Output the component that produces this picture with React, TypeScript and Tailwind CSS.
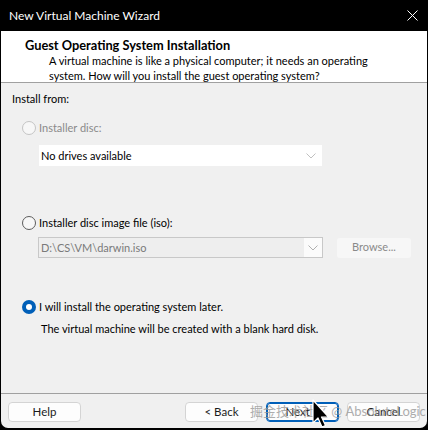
import React from 'react';

const font = { fontFamily: 'Lato, "Noto Sans CJK SC", sans-serif' };

const Radio = ({ checked = false, disabled = false }: { checked?: boolean; disabled?: boolean }) => {
  if (checked) {
    return (
      <span className="flex h-[14px] w-[14px] items-center justify-center rounded-full bg-[#005fb8]">
        <span className="h-[6px] w-[6px] rounded-full bg-white" />
      </span>
    );
  }
  return (
    <span
      className={`h-[14px] w-[14px] rounded-full border bg-[#f7f7f7] ${
        disabled ? 'border-[#c4c4c4]' : 'border-[#5c5c5c]'
      }`}
    />
  );
};

const Chevron = ({ color = '#9a9a9a' }: { color?: string }) => (
  <svg width="10" height="6" viewBox="0 0 10 6" fill="none">
    <path d="M0.5 0.5 L5 5 L9.5 0.5" stroke={color} strokeWidth="1" />
  </svg>
);

const Button = ({ label, focused = false }: { label: string; focused?: boolean }) => (
  <div
    className={`flex h-[20px] w-[73px] items-center justify-center rounded-[4px] border bg-[#fdfdfd] text-[11.5px] text-[#1b1b1b] ${
      focused ? 'border-[#005fb8] shadow-[inset_0_0_0_1px_#005fb8]' : 'border-[#d4d4d4]'
    }`}
  >
    {label}
  </div>
);

export default function App() {
  return (
    <div className="relative h-[430px] w-[428px] overflow-hidden bg-black" style={font}>
      {/* Title bar */}
      <div className="flex h-[31px] items-center justify-between pl-[9px] pr-[10px] text-[12px] text-white">
        <span>New Virtual Machine Wizard</span>
        <svg width="11" height="11" viewBox="0 0 11 11">
          <path d="M0.5 0.5 L10.5 10.5 M10.5 0.5 L0.5 10.5" stroke="#ffffff" strokeWidth="1" />
        </svg>
      </div>

      <div className="mx-[1px] flex h-[397px] flex-col overflow-hidden rounded-b-[7px] bg-[#f0f0f0]">
        {/* Header */}
        <div className="h-[52px] border-b border-[#a0a0a0] bg-white pl-[24px] pt-[6px] text-[11px] text-black">
          <div className="text-[12.8px] font-bold leading-[16px]">Guest Operating System Installation</div>
          <div className="pl-[24px] leading-[15px]">
            A virtual machine is like a physical computer; it needs an operating
            <br />
            system. How will you install the guest operating system?
          </div>
        </div>

        {/* Body */}
        <div className="h-[311px] border-b border-[#a0a0a0] pl-[11px] text-[11px] text-black">
          <div className="pt-[8px] leading-[16px]">Install from:</div>

          <div className="mt-[13px] flex items-center gap-[3px] pl-[10px] leading-[16px] text-[#8a8a8a]">
            <Radio disabled />
            <span>Installer disc:</span>
          </div>
          <div className="ml-[27px] mt-[9px] flex h-[21px] w-[283px] items-center justify-between bg-white pl-[2px] pr-[6px] leading-[16px] text-black">
            <span>No drives available</span>
            <Chevron color="#c0c0c0" />
          </div>

          <div className="mt-[49px] flex items-center gap-[3px] pl-[10px] leading-[16px]">
            <Radio />
            <span>Installer disc image file (iso):</span>
          </div>
          <div className="mt-[6px] flex items-center">
            <div className="ml-[26px] flex h-[21px] w-[285px] items-center border border-[#c8c8c8] bg-[#fbfbfb]">
              <div className="flex h-full flex-1 items-center bg-[#eeeeee] pl-[2px] leading-[16px] text-[#7a7a7a]">
                D:\CS\VM\darwin.iso
              </div>
              <div className="flex w-[18px] justify-center">
                <Chevron color="#b0b0b0" />
              </div>
            </div>
            <div className="ml-[14px] flex h-[20px] w-[74px] items-center justify-center rounded-[3px] bg-[#f7f7f7] text-[#8a8a8a]">
              Browse...
            </div>
          </div>

          <div className="mt-[41px] flex items-center gap-[3px] pl-[10px] leading-[16px]">
            <Radio checked />
            <span>I will install the operating system later.</span>
          </div>
          <div className="mt-[6px] pl-[29px] leading-[16px]">
            The virtual machine will be created with a blank hard disk.
          </div>
        </div>

        {/* Buttons */}
        <div className="flex flex-1 items-start px-[7px] pt-[8px]">
          <Button label="Help" />
          <div className="ml-auto flex gap-[8px]">
            <Button label="< Back" />
            <Button label="Next >" focused />
            <Button label="Cancel" />
          </div>
        </div>
      </div>

      {/* Watermark */}
      <div className="pointer-events-none absolute left-[250px] top-[403px] whitespace-nowrap text-[13px] leading-[17px] text-[#9a9a9a] opacity-80">
        掘金技术社区 @ AbsoluteLogic
      </div>

      {/* Cursor */}
      <svg className="absolute left-[312px] top-[399px]" width="20" height="31" viewBox="0 0 20 31">
        <path
          d="M1 1 L1 24 L6 19 L10 28 L13.5 26.5 L9.5 18 L16.5 18 Z"
          fill="#000000"
          stroke="#ffffff"
          strokeWidth="1.2"
          strokeLinejoin="round"
        />
      </svg>
    </div>
  );
}
